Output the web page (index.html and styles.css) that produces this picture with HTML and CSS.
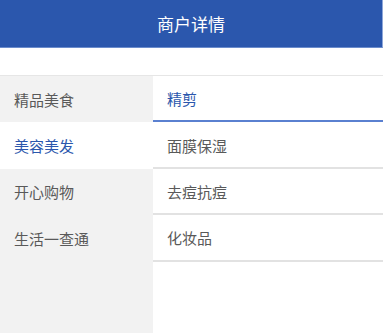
FILE: index.html
```html
<!DOCTYPE html>
<html lang="zh">
<head>
<meta charset="utf-8">
<title>商户详情</title>
<link rel="stylesheet" href="styles.css">
</head>
<body>
<header class="topbar">商户详情</header>
<div class="spacer"></div>
<main class="panes">
  <nav class="cats">
    <div class="cat">精品美食</div>
    <div class="cat active">美容美发</div>
    <div class="cat">开心购物</div>
    <div class="cat">生活一查通</div>
  </nav>
  <section class="subs">
    <div class="sub active">精剪</div>
    <div class="sub">面膜保湿</div>
    <div class="sub">去痘抗痘</div>
    <div class="sub">化妆品</div>
  </section>
</main>
</body>
</html>
```
FILE: styles.css
```css
html, body {
  margin: 0;
  padding: 0;
  height: 100%;
  background: #ffffff;
  font-family: "Noto Sans CJK SC", "Noto Sans", sans-serif;
}
body {
  display: flex;
  flex-direction: column;
  overflow: hidden;
}
.topbar {
  box-sizing: border-box;
  height: 48px;
  background: #2b57ad;
  border-bottom: 1px solid #6b8ccc;
  border-right: 1px solid #8ea7d9;
  color: #ffffff;
  font-size: 17px;
  display: flex;
  align-items: center;
  justify-content: center;
  padding-bottom: 1px;
}
.spacer {
  height: 27px;
}
.panes {
  flex: 1;
  display: flex;
  border-top: 1px solid #e6e6e6;
}
.cats {
  width: 153px;
  background: #f2f2f2;
  display: flex;
  flex-direction: column;
}
.cat {
  box-sizing: border-box;
  height: 46.4px;
  display: flex;
  align-items: center;
  padding-left: 14px;
  font-size: 15px;
  color: #595959;
}
.cat.active {
  background: #ffffff;
  color: #2b57ad;
}
.subs {
  flex: 1;
  display: flex;
  flex-direction: column;
}
.sub {
  box-sizing: border-box;
  height: 46.4px;
  flex: none;
  display: flex;
  align-items: center;
  padding-left: 14px;
  padding-top: 1px;
  font-size: 15px;
  color: #595959;
  border-bottom: 2px solid #e2e2e2;
}
.sub.active {
  color: #2b57ad;
  border-bottom: 2px solid #5a80d0;
}
```
